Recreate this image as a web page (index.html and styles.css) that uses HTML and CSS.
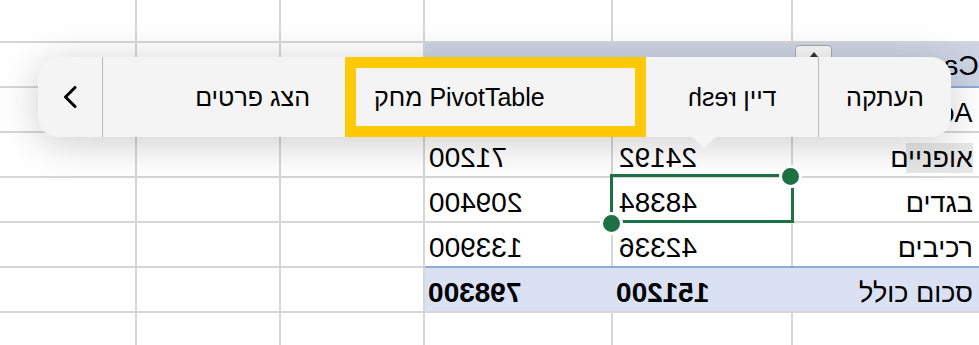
FILE: index.html
```html
<!DOCTYPE html>
<html lang="he">
  <head>
    <meta charset="UTF-8" />
    <title>PivotTable</title>
    <link rel="stylesheet" href="styles.css">
  </head>
  <body>
    <div class="sheet">
      <div class="grid">
        <!-- שורה ריקה עליונה -->
        <div class="cell"></div><div class="cell"></div><div class="cell"></div>
        <div class="cell"></div><div class="cell"></div><div class="cell"></div>

        <!-- כותרת -->
        <div class="cell"></div><div class="cell"></div><div class="cell"></div>
        <div class="cell head-row">
          <span class="filter-btn"><i></i></span>
          <span class="flip">Ca</span>
        </div>

        <div class="cell"></div><div class="cell"></div><div class="cell"></div>
        <div class="cell"></div><div class="cell"></div>
        <div class="cell label"><span class="flip">Ac</span></div>

        <div class="cell"></div><div class="cell"></div><div class="cell"></div>
        <div class="cell num"><span class="flip">71200</span></div>
        <div class="cell num num-b"><span class="flip">24192</span></div>
        <div class="cell label"><span class="hl">אופניים</span></div>

        <div class="cell"></div><div class="cell"></div><div class="cell"></div>
        <div class="cell num"><span class="flip">209400</span></div>
        <div class="cell num num-b selected">
          <span class="flip">48384</span>
          <div class="sel-box"></div>
          <span class="handle handle-tr"></span>
          <span class="handle handle-bl"></span>
        </div>
        <div class="cell label">בגדים</div>

        <div class="cell"></div><div class="cell"></div><div class="cell"></div>
        <div class="cell num"><span class="flip">133900</span></div>
        <div class="cell num num-b"><span class="flip">42336</span></div>
        <div class="cell label">רכיבים</div>

        <!-- סכום כולל -->
        <div class="cell"></div><div class="cell"></div><div class="cell"></div>
        <div class="cell total-row">
          <div class="num total"><span class="flip">798300</span></div>
          <div class="num total"><span class="flip">151200</span></div>
          <div class="label">סכום כולל</div>
        </div>

        <div class="cell"></div><div class="cell"></div><div class="cell"></div>
        <div class="cell"></div><div class="cell"></div><div class="cell"></div>
      </div>

      <div class="menu">
        <div class="menu-item m-back">
          <svg width="14" height="22" viewBox="0 0 14 22">
            <polyline points="12,1.5 2.5,11 12,20.5" fill="none" stroke="#000" stroke-width="3" stroke-linecap="round" stroke-linejoin="round"/>
          </svg>
        </div>
        <div class="menu-item m-details">הצג פרטים</div>
        <div class="menu-item m-pivot"><span>מחק</span><span>PivotTable</span></div>
        <div class="menu-item m-refresh"><span class="flip">resh</span><span>דיין</span></div>
        <div class="menu-item m-copy">העתקה</div>
      </div>
    </div>
  </body>
</html>
```

FILE: styles.css
```css
:root {
  --grid-line: #d6d6d6;
  --pivot-blue: #d9e1f2;
  --pivot-head: #ccd4e4;
  --pivot-line: #8eaadb;
  --excel-green: #1e7145;
  --menu-bg: #f4f4f4;
  --yellow: #ffc907;
}

* {
  margin: 0;
  padding: 0;
  box-sizing: border-box;
}

body {
  background: #fff;
  font-family: "Liberation Sans", "DejaVu Sans", sans-serif;
  color: #000;
}

.sheet {
  position: relative;
  width: 979px;
  height: 345px;
  overflow: hidden;
}

/* הגיליון: הקווים הם הרווח בין התאים */
.grid {
  display: grid;
  grid-template-columns: 135px 142px 142px 186px 178px 186px;
  grid-template-rows: 41px repeat(6, 43px) 32px;
  gap: 2px;
  background: var(--grid-line);
  width: 979px;
  height: 345px;
}

.cell {
  background: #fff;
}

.flip {
  display: inline-block;
  transform: scaleX(-1);
}

.num {
  font-size: 28px;
  line-height: 37px;
  padding-top: 6px;
  padding-left: 4px;
  white-space: nowrap;
}

.num-b {
  padding-left: 6px;
}

.label {
  font-size: 27px;
  line-height: 37px;
  padding-top: 7px;
  padding-right: 6px;
  text-align: right;
  white-space: nowrap;
}

.hl {
  background: linear-gradient(to right, transparent 16px, #e6e6e6 16px);
}

.head-row {
  grid-column: span 3;
  position: relative;
  background: var(--pivot-head);
  box-shadow: 0 2px 0 var(--pivot-line);
  font-size: 28px;
  line-height: 37px;
  padding-top: 4px;
  text-align: right;
}

.filter-btn {
  position: absolute;
  left: 370px;
  top: 2px;
  width: 37px;
  height: 26px;
  background: #f7f7f7;
  border: 1px solid #aaa;
  border-radius: 4px;
  display: flex;
  justify-content: center;
  padding-top: 6px;
}

.filter-btn i {
  width: 0;
  height: 0;
  border-left: 5px solid transparent;
  border-right: 5px solid transparent;
  border-bottom: 6px solid #333;
}

.total-row {
  grid-column: span 3;
  display: grid;
  grid-template-columns: 188px 180px 1fr;
  background: var(--pivot-blue);
  box-shadow: 0 -2px 0 var(--pivot-line);
}

.total {
  font-weight: bold;
  padding-left: 3px;
}

/* תא נבחר */
.selected {
  position: relative;
}

.sel-box {
  position: absolute;
  left: -3px;
  top: -4px;
  width: 184px;
  height: 49px;
  border: 3px solid var(--excel-green);
}

.handle {
  position: absolute;
  width: 23px;
  height: 23px;
  border-radius: 50%;
  background: var(--excel-green);
  border: 3px solid #fff;
}

.handle-tr {
  left: 166px;
  top: -13px;
}

.handle-bl {
  left: -13px;
  top: 34px;
}

/* תפריט ההקשר */
.menu {
  position: absolute;
  left: 38px;
  top: 57px;
  width: 913px;
  height: 80px;
  display: flex;
  background: var(--menu-bg);
  border-radius: 20px;
  box-shadow: 0 6px 40px rgba(0, 0, 0, 0.2);
  font-size: 25px;
}

.menu::after {
  content: "";
  position: absolute;
  left: 657px;
  top: 70px;
  width: 18px;
  height: 18px;
  background: var(--menu-bg);
  transform: rotate(45deg);
}

.menu-item {
  display: flex;
  align-items: center;
  white-space: nowrap;
}

.m-back {
  width: 65px;
  justify-content: center;
  border-right: 1px solid #b9b9b9;
}

.m-details {
  width: 242px;
  justify-content: flex-end;
  padding-right: 35px;
}

.m-pivot {
  width: 301px;
  border: 11px solid var(--yellow);
  padding-left: 18px;
  gap: 7px;
}

.m-refresh {
  width: 173px;
  justify-content: center;
  gap: 7px;
  border-right: 1px solid #b9b9b9;
}

.m-copy {
  flex: 1;
  justify-content: center;
}
```
